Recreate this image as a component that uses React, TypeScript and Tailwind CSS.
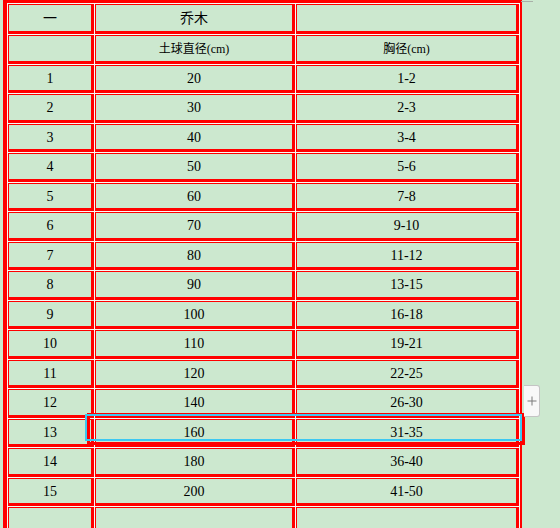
import React from "react";

const rows: [string, string, string][] = [
  ["1", "20", "1-2"],
  ["2", "30", "2-3"],
  ["3", "40", "3-4"],
  ["4", "50", "5-6"],
  ["5", "60", "7-8"],
  ["6", "70", "9-10"],
  ["7", "80", "11-12"],
  ["8", "90", "13-15"],
  ["9", "100", "16-18"],
  ["10", "110", "19-21"],
  ["11", "120", "22-25"],
  ["12", "140", "26-30"],
  ["13", "160", "31-35"],
  ["14", "180", "36-40"],
  ["15", "200", "41-50"],
  ["", "", ""],
];

const cell =
  "flex items-center justify-center bg-[#cce8cf] border-[#ff0000] border-t border-l border-r-[3px] border-b-[3px] text-black whitespace-nowrap";

function Row({ h, a, b, c, size }: { h: string; a: string; b: string; c: string; size: string }) {
  return (
    <div className={`flex gap-px ${h}`}>
      <div className={`${cell} w-[86px] ${size}`}>{a}</div>
      <div className={`${cell} w-[200px] ${size}`}>{b}</div>
      <div className={`${cell} w-[223px] ${size}`}>{c}</div>
    </div>
  );
}

export default function App() {
  return (
    <div
      className="relative w-[560px] h-[528px] overflow-hidden bg-[#cce8cf]"
      style={{ fontFamily: '"Liberation Serif", "Noto Sans CJK SC", serif' }}
    >
      <div className="ml-[3px] w-[519px] flex flex-col gap-px p-px bg-[#f6fbf6] border-[#ff0000] border-t-[3px] border-l-[4px] border-r-[2px]">
        <Row h="h-[30px]" a="一" b="乔木" c="" size="text-[14px]" />
        <Row h="h-[29px]" a="" b="土球直径(cm)" c="胸径(cm)" size="text-[12px]" />
        {rows.map((r, i) => (
          <Row
            key={i}
            h={i % 2 === 0 ? "h-[28px]" : "h-[29px]"}
            a={r[0]}
            b={r[1]}
            c={r[2]}
            size="text-[14px]"
          />
        ))}
      </div>

      {/* page margin marker */}
      <div className="absolute left-[521px] top-px w-[12px] h-px bg-[#a8b0a8]" />

      {/* selection outlines */}
      <div className="absolute left-[87px] top-[413px] w-[438px] h-[32px] border-[3px] border-[#ff0000]" />
      <div className="absolute left-[85px] top-[414px] w-[437px] h-[27px] border-2 border-[#3cc8f2]" />

      {/* add row button */}
      <div className="absolute left-[524px] top-[385px] w-[16px] h-[32px] bg-[#f8f8f8] border border-l-0 border-[#c4c4c4] rounded-r-[3px] flex items-center justify-center">
        <svg width="10" height="10" viewBox="0 0 10 10">
          <path d="M5 0.5V9.5M0.5 5H9.5" stroke="#7a7a7a" strokeWidth="1" />
        </svg>
      </div>
    </div>
  );
}
